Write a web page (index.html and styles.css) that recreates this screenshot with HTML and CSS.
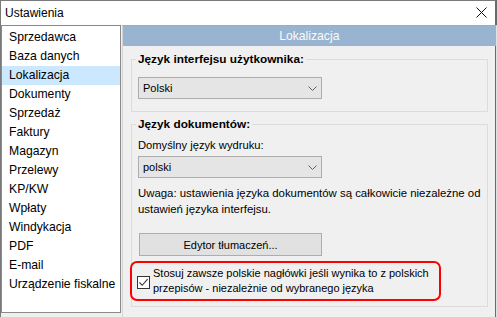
FILE: index.html
```html
<!DOCTYPE html>
<html lang="pl">
<head>
<meta charset="utf-8">
<title>Ustawienia</title>
<link rel="stylesheet" href="styles.css">
</head>
<body>
<div class="window">
  <div class="titlebar">
    <span class="title">Ustawienia</span>
    <svg class="close" width="11" height="11" viewBox="0 0 11 11"><path d="M0.5 0.5 L10.5 10.5 M10.5 0.5 L0.5 10.5" stroke="#111" stroke-width="1" fill="none"/></svg>
  </div>
  <div class="main">
    <ul class="list">
      <li>Sprzedawca</li>
      <li>Baza danych</li>
      <li class="selected">Lokalizacja</li>
      <li>Dokumenty</li>
      <li>Sprzedaż</li>
      <li>Faktury</li>
      <li>Magazyn</li>
      <li>Przelewy</li>
      <li>KP/KW</li>
      <li>Wpłaty</li>
      <li>Windykacja</li>
      <li>PDF</li>
      <li>E-mail</li>
      <li>Urządzenie fiskalne</li>
    </ul>
    <div class="panel">
      <div class="panel-header">Lokalizacja</div>
      <fieldset class="group group-ui">
        <legend>Język interfejsu użytkownika:</legend>
        <div class="combo combo-first"><span>Polski</span><svg class="chev" width="9" height="5" viewBox="0 0 9 5"><path d="M0.5 0.5 L4.5 4.5 L8.5 0.5" stroke="#606060" fill="none"/></svg></div>
      </fieldset>
      <fieldset class="group group-doc">
        <legend>Język dokumentów:</legend>
        <div class="label">Domyślny język wydruku:</div>
        <div class="combo combo-second"><span>polski</span><svg class="chev" width="9" height="5" viewBox="0 0 9 5"><path d="M0.5 0.5 L4.5 4.5 L8.5 0.5" stroke="#606060" fill="none"/></svg></div>
        <p class="note">Uwaga: ustawienia języka dokumentów są całkowicie niezależne od<br>ustawień języka interfejsu.</p>
        <div class="button">Edytor tłumaczeń...</div>
        <div class="highlight">
          <span class="checkbox"><svg width="11" height="11" viewBox="0 0 11 11"><path d="M1.5 5.5 L4.2 8.3 L9.6 2.2" stroke="#333" stroke-width="1.1" fill="none"/></svg></span>
          <span class="check-text">Stosuj zawsze polskie nagłówki jeśli wynika to z polskich<br>przepisów - niezależnie od wybranego języka</span>
        </div>
      </fieldset>
    </div>
  </div>
</div>
</body>
</html>
```
FILE: styles.css
```css
* { box-sizing: border-box; }
html, body {
  margin: 0;
  padding: 0;
  width: 497px;
  height: 317px;
  overflow: hidden;
  background: #f0f0f0;
}
body {
  font-family: "Liberation Sans", Arial, sans-serif;
  font-size: 12px;
  color: #000;
}
.window {
  width: 497px;
  height: 317px;
  border-top: 1px solid #7a7a7a;
  border-left: 1px solid #7a7a7a;
  border-right: 2px solid #6a6a6a;
  background: #f0f0f0;
  display: flex;
  flex-direction: column;
}
.titlebar {
  height: 24px;
  background: #fff;
  display: flex;
  align-items: center;
  justify-content: space-between;
  padding: 0 8px 1px 4px;
  flex: none;
}
.title { font-size: 12px; }
.close { display: block; }
.main {
  display: flex;
  flex: 1;
  min-height: 0;
}
.list {
  list-style: none;
  margin: 0 0 4px 0;
  padding: 2px 0 0 0;
  width: 120px;
  background: #fff;
  border: 1px solid #8a8a8a;
  flex: none;
}
.list li {
  height: 19px;
  line-height: 19px;
  padding-left: 7px;
  white-space: nowrap;
  font-size: 12.2px;
}
.list li.selected { background: #cce8ff; }
.panel {
  margin-left: 1px;
  flex: 1;
  border-top: 1px solid #a9a9a9;
  border-left: 1px solid #d4d4d4;
  border-right: 1px solid #e2e2e2;
  display: flex;
  flex-direction: column;
}
.panel-header {
  height: 20px;
  line-height: 20px;
  background: #99b4d1;
  color: #fafafa;
  text-align: center;
  font-size: 12.2px;
}
.group {
  margin: 0 8px;
  padding: 0 6px;
  border: 1px solid #dcdcdc;
  min-width: 0;
}
.group legend {
  font-weight: bold;
  font-size: 11.8px;
  line-height: 14px;
  padding: 0 2px;
  margin-left: -2px;
}
.group-ui {
  margin-top: 6px;
  padding-bottom: 12px;
}
.group-doc {
  margin-top: 5px;
  padding-bottom: 5px;
}
.combo {
  width: 184px;
  height: 22px;
  border: 1px solid #adadad;
  background: #e5e5e5;
  display: flex;
  align-items: center;
  justify-content: space-between;
  padding: 0 4px 0 4px;
}
.combo span { font-size: 11px; }
.chev { display: block; }
.combo-first { margin-top: 11px; }
.label {
  margin-top: 7px;
  line-height: 15px;
  font-size: 11.2px;
}
.combo-second { margin-top: 3px; }
.note {
  margin: 7px 0 0 0;
  line-height: 16px;
  white-space: nowrap;
  font-size: 11.4px;
}
.button {
  margin-top: 16px;
  margin-left: 1px;
  width: 183px;
  height: 23px;
  border: 1px solid #adadad;
  background: #e1e1e1;
  display: flex;
  align-items: center;
  justify-content: center;
  font-size: 11px;
}
.highlight {
  margin-top: 5px;
  margin-left: -8px;
  width: 311px;
  border: 2px solid #ff0000;
  border-radius: 7px;
  padding: 3px 4px 3px 5px;
  display: flex;
  align-items: center;
  gap: 3px;
}
.checkbox {
  width: 13px;
  height: 13px;
  border: 1px solid #333;
  background: #fff;
  flex: none;
  display: flex;
  align-items: center;
  justify-content: center;
  margin-top: 2px;
}
.checkbox svg { display: block; }
.check-text {
  line-height: 15px;
  white-space: nowrap;
  font-size: 11px;
}
```
